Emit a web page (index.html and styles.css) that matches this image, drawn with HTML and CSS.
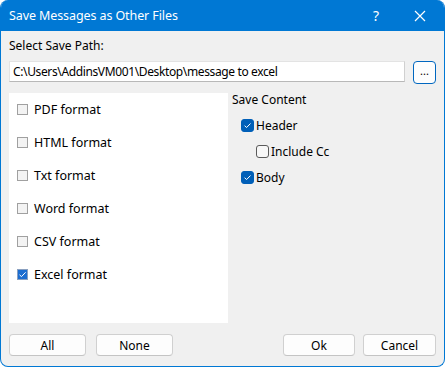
FILE: index.html
```html
<!DOCTYPE html>
<html>
<head>
<meta charset="utf-8">
<link rel="stylesheet" href="styles.css">
</head>
<body>
<div class="window">
  <div class="titlebar">
    <span class="title">Save Messages as Other Files</span>
    <span class="help">?</span>
    <span class="close">
      <svg width="12" height="12" viewBox="0 0 12 12"><path d="M1 1L11 11M11 1L1 11" stroke="#fff" stroke-width="1.2" fill="none"/></svg>
    </span>
  </div>
  <div class="content">
    <div class="label">Select Save Path:</div>
    <div class="path-row">
      <div class="path-input">C:\Users\AddinsVM001\Desktop\message to excel</div>
      <button class="browse">...</button>
    </div>
    <div class="main">
      <div class="formats">
        <div class="fmt"><span class="sq"></span>PDF format</div>
        <div class="fmt"><span class="sq"></span>HTML format</div>
        <div class="fmt"><span class="sq"></span>Txt format</div>
        <div class="fmt"><span class="sq"></span>Word format</div>
        <div class="fmt"><span class="sq"></span>CSV format</div>
        <div class="fmt"><span class="sq on"><svg width="9" height="9" viewBox="0 0 9 9"><path d="M1.5 4.8L3.5 6.6L7.6 2.3" stroke="#fff" stroke-width="1" fill="none"/></svg></span>Excel format</div>
      </div>
      <div class="options">
        <div class="opt-title">Save Content</div>
        <div class="opt"><span class="rb on"><svg width="9" height="9" viewBox="0 0 9 9"><path d="M1.6 4.7L3.6 6.5L7.5 2.5" stroke="#fff" stroke-width="1" fill="none"/></svg></span>Header</div>
        <div class="opt sub"><span class="rb"></span>Include Cc</div>
        <div class="opt"><span class="rb on"><svg width="9" height="9" viewBox="0 0 9 9"><path d="M1.6 4.7L3.6 6.5L7.5 2.5" stroke="#fff" stroke-width="1" fill="none"/></svg></span>Body</div>
      </div>
    </div>
    <div class="footer">
      <button class="btn w-all">All</button>
      <button class="btn w-none">None</button>
      <span class="spacer"></span>
      <button class="btn w-ok">Ok</button>
      <button class="btn w-cancel">Cancel</button>
    </div>
  </div>
</div>
</body>
</html>
```

FILE: styles.css
```css
* { box-sizing: border-box; }
html, body { margin: 0; padding: 0; background: #ffffff; }
body {
  font-family: "Noto Sans", "Segoe UI", sans-serif;
  font-size: 12px;
  color: #000;
}
.window {
  width: 445px;
  height: 367px;
  background: #f0f0f0;
  border: 1px solid #0078d4;
  border-top: none;
  border-radius: 8px 8px 8px 8px;
  overflow: hidden;
  display: flex;
  flex-direction: column;
}
.titlebar {
  height: 31px;
  background: #0078d4;
  color: #fff;
  display: flex;
  align-items: center;
  padding-left: 9px;
  margin: 0 -1px;
}
.title { flex: 1; font-size: 12.5px; letter-spacing: -0.1px; }
.help { width: 16px; font-size: 14px; margin-right: 30px; text-align: center; }
.close { width: 14px; margin-right: 17px; display: flex; align-items: center; }
.content {
  flex: 1;
  display: flex;
  flex-direction: column;
  padding: 7px 8px 0 8px;
}
.label { line-height: 16px; }
.path-row {
  display: flex;
  align-items: flex-start;
  margin-top: 7px;
}
.path-input {
  width: 396px;
  height: 21px;
  background: #fff;
  border: 1px solid #e3e3e3;
  border-bottom-color: #b8b8b8;
  border-right-color: #d0d0d0;
  padding: 0 3px;
  line-height: 19px;
  white-space: nowrap;
  letter-spacing: -0.37px;
}
.browse {
  margin-left: 8px;
  width: 23px;
  height: 23px;
  border: 1px solid #0067c0;
  border-radius: 4px;
  background: #fdfdfd;
  font-family: inherit;
  font-size: 11px;
  padding: 0 0 4px 0;
  line-height: 14px;
  color: #000;
}
.main {
  display: flex;
  margin-top: 9px;
  height: 230px;
}
.formats {
  width: 219px;
  background: #fff;
  display: flex;
  flex-direction: column;
}
.fmt {
  height: 33px;
  display: flex;
  align-items: center;
  padding-left: 8px;
  font-size: 12.5px;
}
.sq {
  width: 11px;
  height: 11px;
  border: 1px solid #a0a0a0;
  background: #f3f3f3;
  margin-right: 6px;
  display: flex;
  align-items: center;
  justify-content: center;
}
.sq.on { background: #1c6dd0; border-color: #8aa0c0; }
.options {
  flex: 1;
  padding-left: 4px;
}
.opt-title { line-height: 16px; margin-top: -1px; }
.opt {
  height: 26px;
  display: flex;
  align-items: center;
  padding-left: 9px;
}
.opt:nth-child(2) { margin-top: 4px; }
.opt.sub { padding-left: 24px; }
.rb {
  width: 13px;
  height: 13px;
  border: 1px solid #5a5a5a;
  border-radius: 3px;
  background: #f7f7f7;
  margin-right: 2px;
  display: flex;
  align-items: center;
  justify-content: center;
}
.rb.on { background: #005fb8; border-color: #005fb8; }
.footer {
  display: flex;
  margin-top: 11px;
  height: 22px;
}
.spacer { flex: 1; }
.btn {
  height: 22px;
  border: 1px solid #d0d0d0;
  border-bottom-color: #c4c4c4;
  border-radius: 4px;
  background: #fdfdfd;
  font-family: inherit;
  font-size: 12px;
  color: #000;
  padding: 0;
}
.w-all { width: 77px; }
.w-none { width: 77px; margin-left: 10px; }
.w-ok { width: 72px; }
.w-cancel { width: 73px; margin-left: 8px; }
```
